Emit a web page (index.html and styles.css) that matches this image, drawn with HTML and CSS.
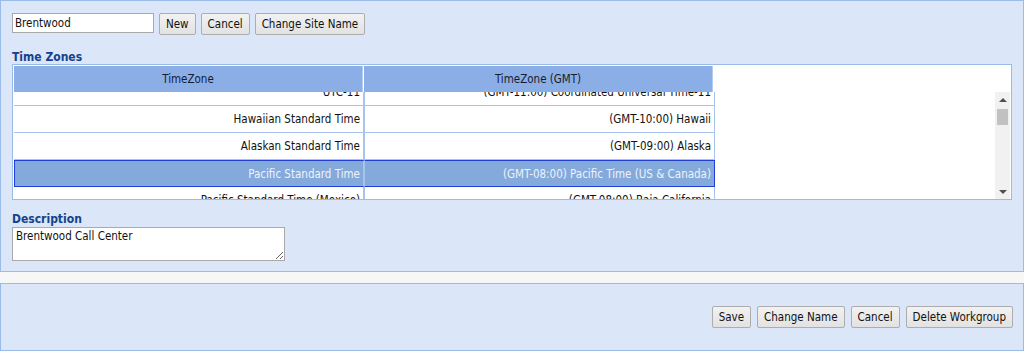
FILE: index.html
```html
<!DOCTYPE html>
<html>

<head>
    <title>Workgroup Site</title>
    <meta charset="UTF-8">
    <link rel="stylesheet" href="styles.css">
</head>

<body>
    <div class="panel site-panel">
        <div class="site-row">
            <input id="site-name" type="text" value="Brentwood" />
            <button type="button">New</button>
            <button type="button">Cancel</button>
            <button type="button">Change Site Name</button>
        </div>

        <div class="field-label">Time Zones</div>
        <div class="grid">
            <div class="grid-head">
                <div class="col">TimeZone</div>
                <div class="col">TimeZone (GMT)</div>
            </div>
            <div class="grid-body">
                <div class="grid-rows">
                    <div class="rows-inner">
                        <div class="row">
                            <div class="col">UTC-11</div>
                            <div class="col">(GMT-11:00) Coordinated Universal Time-11</div>
                        </div>
                        <div class="row">
                            <div class="col">Hawaiian Standard Time</div>
                            <div class="col">(GMT-10:00) Hawaii</div>
                        </div>
                        <div class="row">
                            <div class="col">Alaskan Standard Time</div>
                            <div class="col">(GMT-09:00) Alaska</div>
                        </div>
                        <div class="row selected">
                            <div class="col">Pacific Standard Time</div>
                            <div class="col">(GMT-08:00) Pacific Time (US &amp; Canada)</div>
                        </div>
                        <div class="row">
                            <div class="col">Pacific Standard Time (Mexico)</div>
                            <div class="col">(GMT-08:00) Baja California</div>
                        </div>
                    </div>
                </div>
                <div class="scrollbar">
                    <div class="arrow up"></div>
                    <div class="track">
                        <div class="thumb"></div>
                    </div>
                    <div class="arrow down"></div>
                </div>
            </div>
        </div>

        <div class="field-label desc-label">Description</div>
        <textarea id="description">Brentwood Call Center</textarea>
    </div>

    <div class="panel action-panel">
        <button type="button">Save</button>
        <button type="button">Change Name</button>
        <button type="button">Cancel</button>
        <button type="button">Delete Workgroup</button>
    </div>
</body>

</html>
```

FILE: styles.css
```css
html {
    font-size: 11.5px;
    font-family: 'DejaVu Sans Condensed', 'DejaVu Sans', sans-serif;
}

body {
    margin: 0;
    background-color: #f7f7f7;
    color: #111;
    font-size: 1rem;
}

input,
button,
textarea {
    font-family: inherit;
    font-size: inherit;
    color: #111;
    margin: 0;
}

.panel {
    background-color: #dbe6f9;
    border: 1px solid #99bbe8;
    box-sizing: border-box;
}

.site-panel {
    height: 272px;
    padding: 12px 11px 0 11px;
}

.action-panel {
    height: 68px;
    margin-top: 11px;
    display: flex;
    flex-direction: row;
    justify-content: flex-end;
    align-items: center;
    gap: 6px;
    padding: 0 10px 1px 0;
}

.site-row {
    display: flex;
    flex-direction: row;
    align-items: flex-start;
    gap: 5px;
}

#site-name {
    width: 142px;
    height: 20px;
    box-sizing: border-box;
    border: 1px solid #a9a9a9;
    padding: 0 2px;
    outline: none;
}

button {
    height: 22px;
    box-sizing: border-box;
    padding: 0 6px;
    border: 1px solid #adadad;
    border-radius: 2px;
    background: linear-gradient(#f2f2f2, #e2e2e2);
    cursor: pointer;
}

.field-label {
    color: #15428b;
    font-weight: bold;
    font-size: 12px;
    margin-top: 15px;
    line-height: 14px;
}

.desc-label {
    margin-top: 13px;
    line-height: 13px;
}

.grid {
    border: 1px solid #99bbe8;
    background-color: #fff;
    padding: 1px 1px 0 1px;
    height: 136px;
    box-sizing: border-box;
}

.grid-head {
    display: flex;
    flex-direction: row;
    height: 26px;
}

.grid-head>.col {
    width: 349px;
    box-sizing: border-box;
    background-color: #8caee6;
    border-right: 1px solid #b5cbef;
    color: #141c33;
    display: flex;
    align-items: center;
    justify-content: center;
    margin-right: 1px;
}

.grid-body {
    display: flex;
    flex-direction: row;
    height: 107px;
}

.grid-rows {
    flex: 1;
    overflow: hidden;
}

.rows-inner {
    margin-top: -13px;
}

.row {
    display: flex;
    flex-direction: row;
    height: 27px;
}

.row>.col {
    width: 350px;
    box-sizing: border-box;
    border-right: 1px solid #a9c4ec;
    border-bottom: 1px solid #a9c4ec;
    display: flex;
    align-items: center;
    justify-content: flex-end;
    padding-right: 3px;
    white-space: nowrap;
}

.row>.col:first-child {
    width: 351px;
    border-right: 2px solid #a9c4ec;
}

.row.selected>.col {
    background-color: #84a9db;
    color: #eef3fc;
    border-top: 1px solid #1f3fd8;
    border-bottom: 1px solid #1f3fd8;
}

.row.selected>.col:first-child {
    border-left: 1px solid #1f3fd8;
}

.row.selected>.col:last-child {
    border-right: 1px solid #1f3fd8;
}

.scrollbar {
    width: 15px;
    background-color: #f1f1f1;
    display: flex;
    flex-direction: column;
}

.arrow {
    height: 15px;
    display: flex;
    align-items: center;
    justify-content: center;
}

.arrow::before {
    content: '';
    border-left: 4px solid transparent;
    border-right: 4px solid transparent;
}

.arrow.up::before {
    border-bottom: 4px solid #505050;
}

.arrow.down::before {
    border-top: 4px solid #505050;
}

.track {
    flex: 1;
    padding: 2px 2px 0 2px;
}

.thumb {
    height: 16px;
    background-color: #c1c1c1;
}

#description {
    display: block;
    width: 273px;
    height: 34px;
    box-sizing: border-box;
    border: 1px solid #a9a9a9;
    padding: 1px 3px;
    margin-top: 1px;
    outline: none;
}
```
